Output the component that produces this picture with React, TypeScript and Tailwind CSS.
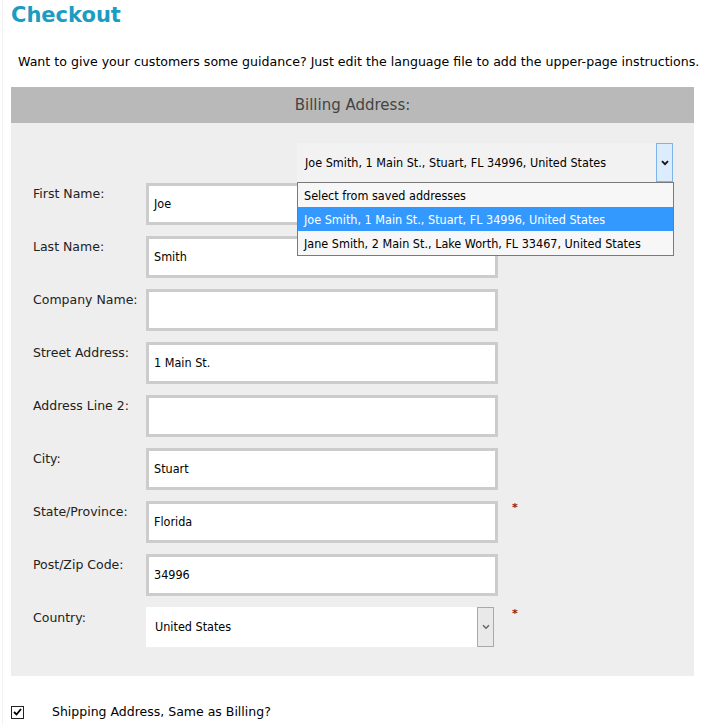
import React from "react";

const verdana = "font-['DejaVu_Sans',Verdana,sans-serif]";
const tahoma = "font-['DejaVu_Sans_Condensed','Liberation_Sans',sans-serif]";

function Row({
  label,
  value,
  required,
}: {
  label: string;
  value: string;
  required?: boolean;
}) {
  return (
    <div className="flex h-[53px] items-start">
      <div className={`w-[113px] whitespace-nowrap pt-[2px] text-[12.5px] text-[#222] ${verdana}`}>{label}</div>
      <div className="flex h-[42px] w-[352px] items-center border-[3px] border-[#cccccc] bg-white px-[5px]">
        <span className={`text-[12.5px] text-black ${tahoma}`}>{value}</span>
      </div>
      {required && (
        <span className="ml-[14px] mt-[1px] text-[11px] font-bold leading-none text-[#8b1a1a]">*</span>
      )}
    </div>
  );
}

export default function App() {
  const rows: { label: string; value: string; required?: boolean }[] = [
    { label: "First Name:", value: "Joe" },
    { label: "Last Name:", value: "Smith" },
    { label: "Company Name:", value: "" },
    { label: "Street Address:", value: "1 Main St." },
    { label: "Address Line 2:", value: "" },
    { label: "City:", value: "Stuart" },
    { label: "State/Province:", value: "Florida", required: true },
    { label: "Post/Zip Code:", value: "34996" },
  ];
  return (
    <div className={`min-h-[725px] w-[705px] bg-white ${verdana}`}>
      <div className="relative px-[11px]">
        <div className="absolute left-[2px] top-0 h-[725px] w-px bg-[#f2f2f2]" />
        <h1 className="pt-[3px] text-[21px] font-bold leading-[24px] text-[#1a9dc1]">Checkout</h1>
        <p className="mt-[27px] whitespace-nowrap pl-[7px] text-[12.6px] leading-[16px] text-black">
          Want to give your customers some guidance? Just edit the language file to add the upper-page instructions.
        </p>
        <div className="mt-[17px] flex h-[36px] items-center justify-center bg-[#b9b9b9] text-[15px] text-[#444]">
          Billing Address:
        </div>
        <div className="bg-[#eeeeee] pb-[29px] pl-[22px] pr-[21px] pt-[20px]">
          <div className="relative flex justify-end">
            <div className="flex h-[39px] w-[376px] items-center bg-[#f2f2f2]">
              <span className={`flex-1 pl-[8px] pt-px text-[12.5px] text-black ${tahoma}`}>
                Joe Smith, 1 Main St., Stuart, FL 34996, United States
              </span>
              <div className="flex h-full w-[17px] items-center justify-center border border-[#7eb4ea] bg-[#dcecfc]">
                <svg width="8" height="6" viewBox="0 0 8 6">
                  <path d="M1 1.2 L4 4.2 L7 1.2" fill="none" stroke="#111" strokeWidth="1.8" />
                </svg>
              </div>
            </div>
            <div
              className={`absolute right-[-1px] top-[39px] z-10 w-[377px] border border-[#7a7a7a] bg-[#f7f7f7] text-[12.5px] ${tahoma}`}
            >
              <div className="flex h-[24px] items-center pl-[6px] pt-[2px] text-black">Select from saved addresses</div>
              <div className="flex h-[24px] items-center bg-[#3399ff] pl-[6px] pt-[2px] text-white">
                Joe Smith, 1 Main St., Stuart, FL 34996, United States
              </div>
              <div className="flex h-[24px] items-center pl-[6px] pt-[2px] text-black">
                Jane Smith, 2 Main St., Lake Worth, FL 33467, United States
              </div>
            </div>
          </div>
          <div className="mt-px">
            {rows.map((r) => (
              <Row key={r.label} label={r.label} value={r.value} required={r.required} />
            ))}
            <div className="flex items-start">
              <div className="w-[113px] pt-[2px] text-[12.5px] text-[#222]">Country:</div>
              <div className="flex h-[40px] w-[348px] items-center bg-white">
                <span className={`flex-1 pl-[9px] text-[12.5px] text-black ${tahoma}`}>United States</span>
                <div className="flex h-full w-[17px] items-center justify-center border border-[#a9a9a9] bg-[#e9e9e9]">
                  <svg width="8" height="6" viewBox="0 0 8 6">
                    <path d="M1 1.2 L4 4.2 L7 1.2" fill="none" stroke="#666" strokeWidth="1.5" />
                  </svg>
                </div>
              </div>
              <span className="ml-[18px] mt-[1px] text-[11px] font-bold leading-none text-[#8b1a1a]">*</span>
            </div>
          </div>
        </div>
        <div className="mt-[27px] flex items-center">
          <div className="flex h-[13px] w-[13px] items-center justify-center border border-[#222] bg-white">
            <svg width="9" height="8" viewBox="0 0 9 8">
              <path d="M1 4 L3.5 6.5 L8 1" fill="none" stroke="#000" strokeWidth="1.8" />
            </svg>
          </div>
          <span className="ml-[28px] text-[12.5px] text-black">Shipping Address, Same as Billing?</span>
        </div>
      </div>
    </div>
  );
}
